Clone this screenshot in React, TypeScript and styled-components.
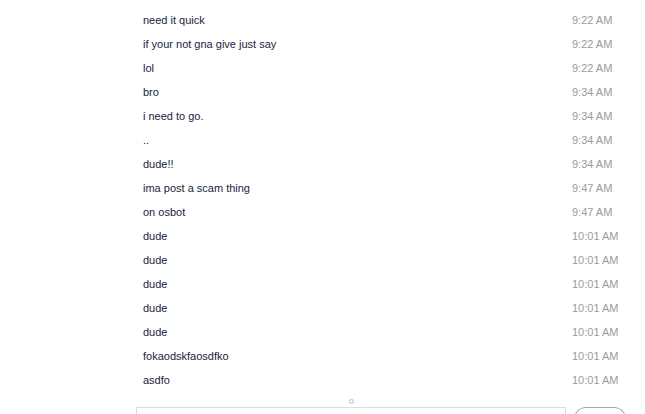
import React from "react";
import styled, { createGlobalStyle } from "styled-components";

const Global = createGlobalStyle`
  html, body { margin: 0; padding: 0; background: #fff; overflow: hidden; }
  body { font-family: "Liberation Sans", Arial, sans-serif; }
`;

const Page = styled.div`
  width: 645px;
  height: 414px;
  display: flex;
  flex-direction: column;
  overflow: hidden;
`;

const List = styled.div`
  flex-shrink: 0;
  display: flex;
  flex-direction: column;
  padding: 8px 28px 0 143px;
`;

const Row = styled.div`
  height: 24px;
  display: grid;
  grid-template-columns: 1fr 45px;
  align-items: center;
  font-size: 11px;
`;

const Text = styled.span`
  color: #1c1c3c;
`;

const Time = styled.span`
  color: #9a9aa6;
  white-space: nowrap;
`;

const Handle = styled.div`
  flex-shrink: 0;
  height: 15px;
  display: flex;
  justify-content: center;
  align-items: flex-end;
  padding-left: 58px;
`;

const Dot = styled.div`
  width: 3px;
  height: 3px;
  margin-bottom: 3px;
  border-radius: 50%;
  border: 1px solid #9fc4dc;
`;

const Composer = styled.div`
  flex-shrink: 0;
  display: flex;
  gap: 8px;
  padding-left: 136px;
`;

const Input = styled.div`
  width: 428px;
  height: 20px;
  border: 1px solid #dcdcdc;
  border-bottom: none;
`;

const Button = styled.div`
  width: 50px;
  height: 20px;
  border: 1px solid #a8a8a8;
  border-bottom: none;
  border-radius: 12px 12px 0 0;
`;

const messages: [string, string][] = [
  ["need it quick", "9:22 AM"],
  ["if your not gna give just say", "9:22 AM"],
  ["lol", "9:22 AM"],
  ["bro", "9:34 AM"],
  ["i need to go.", "9:34 AM"],
  ["..", "9:34 AM"],
  ["dude!!", "9:34 AM"],
  ["ima post a scam thing", "9:47 AM"],
  ["on osbot", "9:47 AM"],
  ["dude", "10:01 AM"],
  ["dude", "10:01 AM"],
  ["dude", "10:01 AM"],
  ["dude", "10:01 AM"],
  ["dude", "10:01 AM"],
  ["fokaodskfaosdfko", "10:01 AM"],
  ["asdfo", "10:01 AM"],
];

export default function App() {
  return (
    <Page>
      <Global />
      <List>
        {messages.map(([t, time], i) => (
          <Row key={i}>
            <Text>{t}</Text>
            <Time>{time}</Time>
          </Row>
        ))}
      </List>
      <Handle>
        <Dot />
      </Handle>
      <Composer>
        <Input />
        <Button />
      </Composer>
    </Page>
  );
}
